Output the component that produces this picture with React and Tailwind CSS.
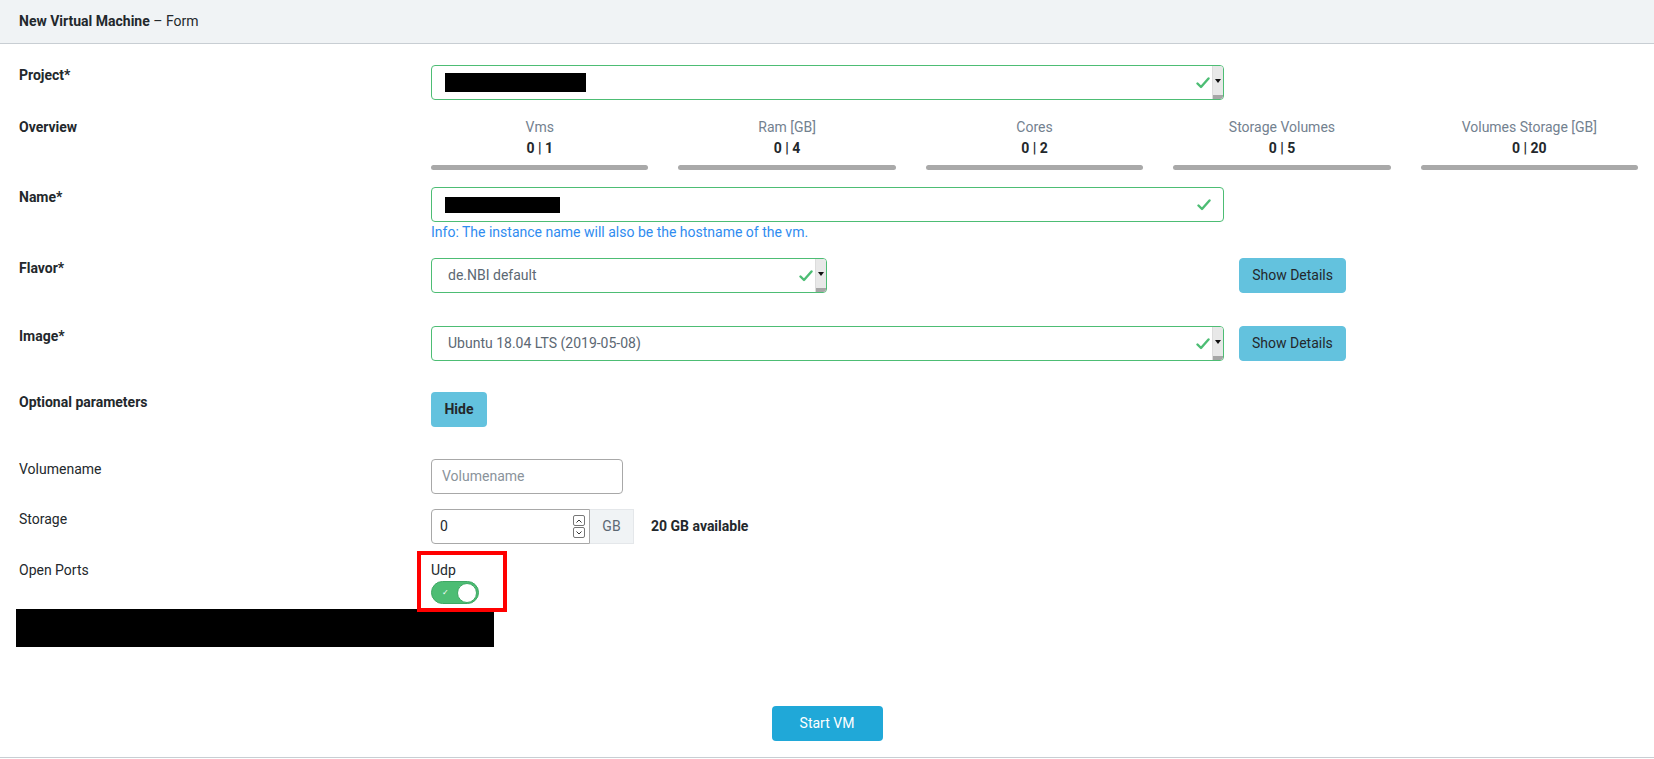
import React from "react";

const Check = ({ className = "" }) => (
  <svg className={className} width="14" height="12" viewBox="0 0 14 12" fill="none">
    <path d="M1.5 6.5 L5 10 L12.5 1.5" stroke="#4dbd74" strokeWidth="2.4" strokeLinecap="round" strokeLinejoin="round" />
  </svg>
);

const SelectArrow = () => (
  <div className="flex flex-col w-[11px] h-full bg-[#e8e8e8] border-l border-[#dcdcdc]">
    <div className="flex-1 flex items-center justify-center">
      <svg width="6" height="4" viewBox="0 0 6 4"><path d="M0 0 L6 0 L3 4 Z" fill="#111" /></svg>
    </div>
    <div className="h-[4px] bg-[#a6a6a6]" />
  </div>
);

const FakeSelect = ({ width, children }) => (
  <div className={`${width} h-[35px] border border-[#4dbd74] rounded-[4px] flex items-stretch overflow-hidden bg-white`}>
    <div className="flex-1 flex items-center pl-[16px] text-[14px] text-[#5c6873]">{children}</div>
    <div className="flex items-center pr-[2px]">
      <Check />
    </div>
    <SelectArrow />
  </div>
);

const Row = ({ label, bold = true, className = "", children }) => (
  <div className={`flex ${className}`}>
    <div className={`w-[412px] shrink-0 text-[14px] leading-[21px] ${bold ? "font-bold" : ""} text-[#23282c]`}>
      {label}
    </div>
    <div className="flex-1">{children}</div>
  </div>
);

const Stat = ({ title, value }) => (
  <div className="flex-1 flex flex-col items-center">
    <div className="text-[14px] leading-[21px] text-[#73818f]">{title}</div>
    <div className="text-[14px] leading-[21px] font-bold text-[#23282c]">{value}</div>
    <div className="w-full h-[5px] mt-[6px] rounded-full bg-[#a9a9a9]" />
  </div>
);

const InfoButton = ({ children }) => (
  <button className="h-[35px] px-[12px] rounded-[4px] bg-[#63c2de] text-[14px] text-[#23282c] border border-[#63c2de]">
    {children}
  </button>
);

export default function App() {
  return (
    <div className="w-[1654px] h-[759px] bg-white text-[#23282c] overflow-hidden" style={{ fontFamily: "Roboto, 'Liberation Sans', sans-serif" }}>
      <div className="h-[759px] flex flex-col">
        <div className="h-[44px] bg-[#f0f3f5] border-b border-[#c8ced3] flex items-center px-[19px] text-[14px]">
          <span className="font-bold">New Virtual Machine</span>
          <span>&nbsp;– Form</span>
        </div>

        <div className="flex-1 px-[19px] pt-[21px] border-b border-[#c8ced3]">
          <Row label="Project*" className="mb-[17px]">
            <FakeSelect width="w-[793px]">
              <div className="w-[141px] h-[19px] bg-black -ml-[3px]" />
            </FakeSelect>
          </Row>

          <Row label="Overview" className="mb-[17px]">
            <div className="flex gap-[30px] w-[1207px]">
              <Stat title="Vms" value="0 | 1" />
              <Stat title="Ram [GB]" value="0 | 4" />
              <Stat title="Cores" value="0 | 2" />
              <Stat title="Storage Volumes" value="0 | 5" />
              <Stat title="Volumes Storage [GB]" value="0 | 20" />
            </div>
          </Row>

          <Row label="Name*" className="mb-[16px]">
            <div className="w-[793px] h-[35px] border border-[#4dbd74] rounded-[4px] flex items-center pl-[13px] pr-[12px]">
              <div className="w-[115px] h-[16px] bg-black" />
              <div className="flex-1" />
              <Check />
            </div>
            <div className="text-[14px] leading-[20px] text-[#2f8cf0]">
              Info: The instance name will also be the hostname of the vm.
            </div>
          </Row>

          <Row label="Flavor*" className="mb-[33px]">
            <div className="flex w-[915px] justify-between">
              <FakeSelect width="w-[396px]">de.NBI default</FakeSelect>
              <InfoButton>Show Details</InfoButton>
            </div>
          </Row>

          <Row label="Image*" className="mb-[31px]">
            <div className="flex gap-[15px]">
              <FakeSelect width="w-[793px]">Ubuntu 18.04 LTS (2019-05-08)</FakeSelect>
              <InfoButton>Show Details</InfoButton>
            </div>
          </Row>

          <Row label="Optional parameters" className="mb-[32px]">
            <button className="h-[35px] w-[56px] rounded-[4px] bg-[#63c2de] text-[14px] font-bold text-[#23282c]">
              Hide
            </button>
          </Row>

          <Row label="Volumename" bold={false} className="mb-[15px]">
            <div className="w-[192px] h-[35px] border border-[#a8a8a8] rounded-[4px] flex items-center px-[10px] text-[14px] text-[#8a939b]">
              Volumename
            </div>
          </Row>

          <Row label="Storage" bold={false} className="mb-[16px]">
            <div className="flex items-center">
              <div className="flex h-[35px]">
                <div className="w-[159px] h-[35px] border border-[#a8a8a8] rounded-l-[4px] flex items-center pl-[8px] pr-[4px] text-[14px]">
                  <span className="flex-1">0</span>
                  <div className="flex flex-col gap-[1px]">
                    <div className="w-[12px] h-[11px] border border-[#777] rounded-[2px] flex items-center justify-center">
                      <svg width="6" height="4" viewBox="0 0 6 4"><path d="M0.5 3.5 L3 1 L5.5 3.5" stroke="#333" fill="none" /></svg>
                    </div>
                    <div className="w-[12px] h-[11px] border border-[#777] rounded-[2px] flex items-center justify-center">
                      <svg width="6" height="4" viewBox="0 0 6 4"><path d="M0.5 0.5 L3 3 L5.5 0.5" stroke="#333" fill="none" /></svg>
                    </div>
                  </div>
                </div>
                <div className="w-[44px] h-[35px] bg-[#f0f3f5] border border-l-0 border-[#e4e7ea] flex items-center justify-center text-[14px] text-[#5c6873]">
                  GB
                </div>
              </div>
              <span className="ml-[17px] text-[14px] font-bold">20 GB available</span>
            </div>
          </Row>

          <Row label="Open Ports" bold={false}>
            <div className="relative w-[80px]">
              <div className="text-[14px] leading-[21px]">Udp</div>
              <div className="w-[48px] h-[23px] rounded-full bg-[#4dbd74] border border-[#3fa864] flex items-center justify-between pl-[10px] pr-[1px]">
                <span className="text-[8px] text-white leading-none">✓</span>
                <div className="w-[20px] h-[20px] rounded-full bg-white border border-[#3fa864]" />
              </div>
              <div className="absolute -left-[14px] -top-[9px] w-[90px] h-[61px] border-[4px] border-[#ff0000] pointer-events-none" />
            </div>
          </Row>

          <div className="-ml-[3px] mt-[5px] w-[478px] h-[38px] bg-black" />

          <div className="flex justify-center mt-[59px]">
            <button className="w-[111px] h-[35px] rounded-[4px] bg-[#20a8d8] text-white text-[14px]">
              Start VM
            </button>
          </div>
        </div>
        <div className="h-[1px]" />
      </div>
    </div>
  );
}
